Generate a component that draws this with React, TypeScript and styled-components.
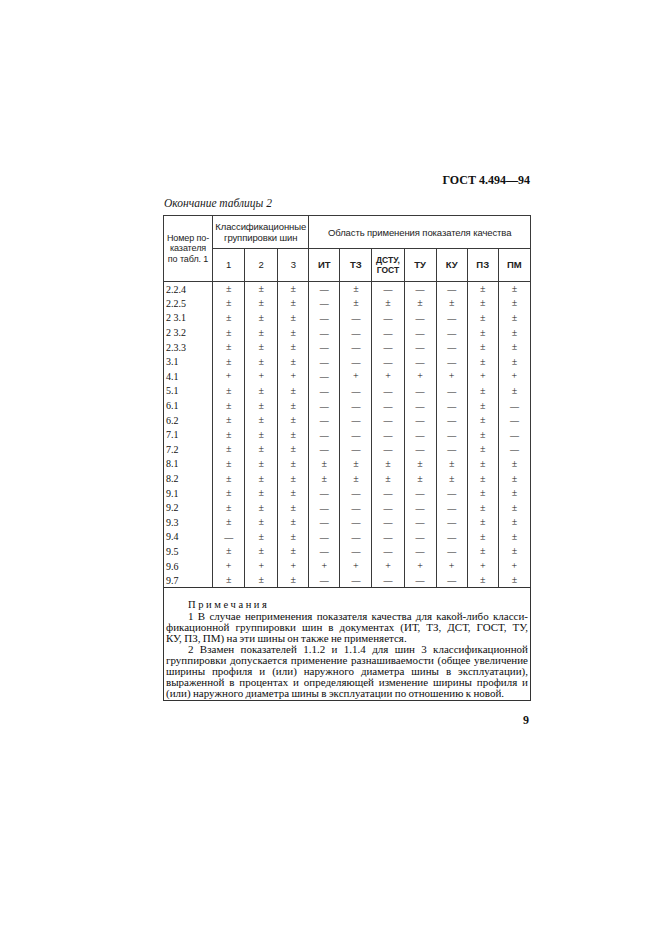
import React from "react"
import styled, { createGlobalStyle } from "styled-components"

const GlobalStyle = createGlobalStyle`
  html, body {
    margin: 0;
    padding: 0;
    background: #fff;
  }
  body {
    font-family: "Liberation Serif", "Times New Roman", serif;
    color: #141414;
  }
`

type Mark = "±" | "+" | "—"

const rows: { id: string; marks: Mark[] }[] = [
  { id: "2.2.4", marks: ["±", "±", "±", "—", "±", "—", "—", "—", "±", "±"] },
  { id: "2.2.5", marks: ["±", "±", "±", "—", "±", "±", "±", "±", "±", "±"] },
  { id: "2 3.1", marks: ["±", "±", "±", "—", "—", "—", "—", "—", "±", "±"] },
  { id: "2 3.2", marks: ["±", "±", "±", "—", "—", "—", "—", "—", "±", "±"] },
  { id: "2.3.3", marks: ["±", "±", "±", "—", "—", "—", "—", "—", "±", "±"] },
  { id: "3.1", marks: ["±", "±", "±", "—", "—", "—", "—", "—", "±", "±"] },
  { id: "4.1", marks: ["+", "+", "+", "—", "+", "+", "+", "+", "+", "+"] },
  { id: "5.1", marks: ["±", "±", "±", "—", "—", "—", "—", "—", "±", "±"] },
  { id: "6.1", marks: ["±", "±", "±", "—", "—", "—", "—", "—", "±", "—"] },
  { id: "6.2", marks: ["±", "±", "±", "—", "—", "—", "—", "—", "±", "—"] },
  { id: "7.1", marks: ["±", "±", "±", "—", "—", "—", "—", "—", "±", "—"] },
  { id: "7.2", marks: ["±", "±", "±", "—", "—", "—", "—", "—", "±", "—"] },
  { id: "8.1", marks: ["±", "±", "±", "±", "±", "±", "±", "±", "±", "±"] },
  { id: "8.2", marks: ["±", "±", "±", "±", "±", "±", "±", "±", "±", "±"] },
  { id: "9.1", marks: ["±", "±", "±", "—", "—", "—", "—", "—", "±", "±"] },
  { id: "9.2", marks: ["±", "±", "±", "—", "—", "—", "—", "—", "±", "±"] },
  { id: "9.3", marks: ["±", "±", "±", "—", "—", "—", "—", "—", "±", "±"] },
  { id: "9.4", marks: ["—", "±", "±", "—", "—", "—", "—", "—", "±", "±"] },
  { id: "9.5", marks: ["±", "±", "±", "—", "—", "—", "—", "—", "±", "±"] },
  { id: "9.6", marks: ["+", "+", "+", "+", "+", "+", "+", "+", "+", "+"] },
  { id: "9.7", marks: ["±", "±", "±", "—", "—", "—", "—", "—", "±", "±"] },
]

// widths of the columns in px, first one is the row number
const colWidths = [49, 32, 33, 31, 31, 32, 32, 32, 31, 31, 32]
// columns whose left border is a broken (dashed) line in the scan
const dashedLeft = [5, 8]

const subHeads: React.ReactNode[] = [
  "1",
  "2",
  "3",
  "ИТ",
  "ТЗ",
  <>
    ДСТУ,
    <br />
    ГОСТ
  </>,
  "ТУ",
  "КУ",
  "ПЗ",
  "ПМ",
]

const App: React.FC = () => {
  return (
    <>
      <GlobalStyle />
      <Page>
        <Sheet>
          <DocCode>ГОСТ 4.494—94</DocCode>
          <Caption>Окончание таблицы 2</Caption>

          <Table>
            <colgroup>
              {colWidths.map((w, i) => (
                <col key={i} style={{ width: w }} />
              ))}
            </colgroup>
            <thead>
              <HeadRow>
                <HeadCell rowSpan={2} $narrow>
                  Номер по-
                  <br />
                  казателя
                  <br />
                  по табл. 1
                </HeadCell>
                <HeadCell colSpan={3}>
                  Классификационные
                  <br />
                  группировки шин
                </HeadCell>
                <HeadCell colSpan={7}>Область применения показателя качества</HeadCell>
              </HeadRow>
              <HeadRow>
                {subHeads.map((h, i) => (
                  <SubHeadCell
                    key={i}
                    $dashed={dashedLeft.includes(i + 1)}
                    $small={i === 5}
                    $bold={i > 2}
                  >
                    {h}
                  </SubHeadCell>
                ))}
              </HeadRow>
            </thead>
            <tbody>
              {rows.map((r, ri) => (
                <BodyRow key={r.id} $last={ri === rows.length - 1}>
                  <IdCell>{r.id}</IdCell>
                  {r.marks.map((m, mi) => (
                    <MarkCell key={mi} $dashed={dashedLeft.includes(mi + 1)}>
                      <MarkGlyph $dash={m === "—"}>{m}</MarkGlyph>
                    </MarkCell>
                  ))}
                </BodyRow>
              ))}
            </tbody>
          </Table>

          <Notes>
            <NotesTitle>Примечания</NotesTitle>
            <NoteLine $indent>
              1 В случае неприменения показателя качества для какой-либо класси-
            </NoteLine>
            <NoteLine>фикационной группировки шин в документах (ИТ, ТЗ, ДСТ, ГОСТ, ТУ,</NoteLine>
            <NoteLine $last>КУ, ПЗ, ПМ) на эти шины он также не применяется.</NoteLine>
            <NoteLine $indent>
              2 Взамен показателей 1.1.2 и 1.1.4 для шин 3 классификационной
            </NoteLine>
            <NoteLine>
              группировки допускается применение разнашиваемости (общее увеличение
            </NoteLine>
            <NoteLine>ширины профиля и (или) наружного диаметра шины в эксплуатации),</NoteLine>
            <NoteLine>выраженной в процентах и определяющей изменение ширины профиля и</NoteLine>
            <NoteLine $last>
              (или) наружного диаметра шины в эксплуатации по отношению к новой.
            </NoteLine>
          </Notes>

          <PageNumber>9</PageNumber>
        </Sheet>
      </Page>
    </>
  )
}

const Page = styled.div`
  width: 661px;
  height: 935px;
  overflow: hidden;
  background: #fff;
  padding: 173px 0 0 163px;
  box-sizing: border-box;
`

const Sheet = styled.div`
  display: flex;
  flex-direction: column;
  width: 368px;
`

const DocCode = styled.div`
  align-self: flex-end;
  font-size: 12px;
  font-weight: 700;
  line-height: 15px;
  margin-right: 1px;
  color: #111;
`

const Caption = styled.div`
  font-style: italic;
  font-size: 11.5px;
  line-height: 14px;
  margin-top: 8px;
  margin-left: 1px;
  color: #1a1a1a;
`

const Table = styled.table`
  border-collapse: collapse;
  table-layout: fixed;
  width: 368px;
  margin-top: 5px;
  border: 1px solid #333;
`

const HeadRow = styled.tr`
  height: 33px;
`

const HeadCell = styled.th<{ $narrow?: boolean }>`
  padding: 0;
  border: 1px solid #3a3a3a;
  font-family: "Liberation Sans", Arial, sans-serif;
  font-weight: 400;
  font-size: ${(p) => (p.$narrow ? "9px" : "9.5px")};
  line-height: ${(p) => (p.$narrow ? "10.5px" : "11px")};
  text-align: center;
  vertical-align: middle;
  color: #1c1c1c;
  letter-spacing: -0.1px;
`

const SubHeadCell = styled.th<{ $dashed?: boolean; $small?: boolean; $bold?: boolean }>`
  padding: 0;
  border: 1px solid #3a3a3a;
  border-left: 1px ${(p) => (p.$dashed ? "dashed #888" : "solid #3a3a3a")};
  font-family: "Liberation Sans", Arial, sans-serif;
  font-weight: ${(p) => (p.$bold ? 700 : 400)};
  font-size: ${(p) => (p.$small ? "8.5px" : "9.5px")};
  line-height: 10px;
  text-align: center;
  vertical-align: middle;
  color: #222;
`

const BodyRow = styled.tr<{ $last?: boolean }>`
  height: 14.6px;

  td {
    vertical-align: middle;
    border-bottom: ${(p) => (p.$last ? "1px solid #333" : "none")};
  }
`

const IdCell = styled.td`
  padding: 1px 0 0 2px;
  border-left: 1px solid #333;
  border-right: 1px solid #3a3a3a;
  font-size: 10px;
  line-height: 12px;
  color: #111;
  white-space: nowrap;
`

const MarkCell = styled.td<{ $dashed?: boolean }>`
  padding: 0;
  border-left: 1px ${(p) => (p.$dashed ? "dashed #888" : "solid #3a3a3a")};
  border-right: 1px solid #3a3a3a;
  text-align: center;
  font-size: 10px;
  line-height: 12px;
`

const MarkGlyph = styled.span<{ $dash?: boolean }>`
  font-size: ${(p) => (p.$dash ? "9px" : "10px")};
  color: #1a1a1a;
`

const Notes = styled.div`
  display: flex;
  flex-direction: column;
  border: 1px solid #333;
  border-top: none;
  padding: 12px 2px 1px 2px;
  font-size: 11px;
  line-height: 10.9px;
  color: #0e0e0e;
`

const NotesTitle = styled.div`
  padding-left: 22px;
  letter-spacing: 2.6px;
  font-size: 10.5px;
`

const NoteLine = styled.div<{ $indent?: boolean; $last?: boolean }>`
  padding-left: ${(p) => (p.$indent ? "22px" : "0")};
  text-align: justify;
  text-align-last: ${(p) => (p.$last ? "left" : "justify")};
  white-space: nowrap;
  word-spacing: -0.4px;
`

const PageNumber = styled.div`
  align-self: flex-end;
  margin-top: 12px;
  margin-right: 2px;
  font-size: 12px;
  font-weight: 700;
  line-height: 14px;
`

export default App
